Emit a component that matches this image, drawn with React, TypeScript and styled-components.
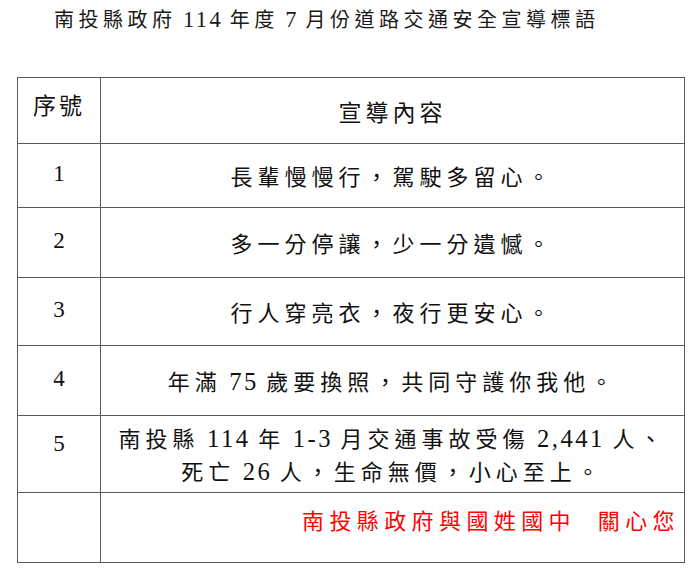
import { Fragment } from 'react';
import styled, { createGlobalStyle } from 'styled-components';

const GlobalStyle = createGlobalStyle`
	html, body {
		margin: 0;
		padding: 0;
		background: #ffffff;
	}
	body {
		font-family: "Liberation Serif", "Noto Sans CJK TC", serif;
		color: #111111;
	}
`;

interface Slogan {
	no: string;
	lines: string[];
	height: number;
	numTop?: boolean;
}

const SLOGANS: Slogan[] = [
	{ no: '1', lines: ['長輩慢慢行，駕駛多留心。'], height: 64 },
	{ no: '2', lines: ['多一分停讓，少一分遺憾。'], height: 70 },
	{ no: '3', lines: ['行人穿亮衣，夜行更安心。'], height: 68 },
	{ no: '4', lines: ['年滿 75 歲要換照，共同守護你我他。'], height: 70 },
	{
		no: '5',
		lines: ['南投縣 114 年 1-3 月交通事故受傷 2,441 人、', '死亡 26 人，生命無價，小心至上。'],
		height: 77,
		numTop: true,
	},
];

// digits are set a little larger than the CJK glyphs, as in the printed sheet
const withNumbers = (text: string) =>
	text.split(/([0-9][0-9,\-]*)/).map((part, i) =>
		/^[0-9]/.test(part) ? <Num key={i}>{part}</Num> : <Fragment key={i}>{part}</Fragment>,
	);

export default function App() {
	return (
		<Page>
			<GlobalStyle />
			<Title>{withNumbers('南投縣政府 114 年度 7 月份道路交通安全宣導標語')}</Title>
			<Table>
				<colgroup>
					<col style={{ width: 83 }} />
					<col />
				</colgroup>
				<tbody>
					<Row $height={66}>
						<HeadNo>序號</HeadNo>
						<HeadContent>宣導內容</HeadContent>
					</Row>
					{SLOGANS.map((s) => (
						<Row key={s.no} $height={s.height}>
							<NoCell $top={!!s.numTop}>{s.no}</NoCell>
							<ContentCell>
								{s.lines.map((line, i) => (
									<Line key={i}>{withNumbers(line)}</Line>
								))}
							</ContentCell>
						</Row>
					))}
					<Row $height={70}>
						<NoCell $top={false} />
						<SignCell>南投縣政府與國姓國中&nbsp;&nbsp;關心您</SignCell>
					</Row>
				</tbody>
			</Table>
		</Page>
	);
}

const Page = styled.div`
	width: 700px;
	height: 575px;
	overflow: hidden;
	padding-top: 8px;
	box-sizing: border-box;
`;

const Title = styled.h1`
	margin: 0 0 0 54px;
	height: 69px;
	font-size: 20px;
	font-weight: normal;
	line-height: 24px;
	letter-spacing: 4.5px;
	word-spacing: -3px;
	color: #1a1a1a;
`;

const Num = styled.span`
	font-size: 1.12em;
	letter-spacing: 2.5px;
	line-height: 0;
`;

const Table = styled.table`
	margin-left: 17px;
	width: 668px;
	border-collapse: collapse;
	table-layout: fixed;

	td {
		border: 1.5px solid #5a5a5a;
		padding: 0;
	}
`;

const Row = styled.tr<{ $height: number }>`
	height: ${({ $height }) => $height}px;
`;

const HeadNo = styled.td`
	text-align: center;
	vertical-align: top;
	padding-top: 14px !important;
	font-size: 23px;
	letter-spacing: 3px;
	line-height: 30px;
`;

const HeadContent = styled.td`
	text-align: center;
	vertical-align: middle;
	padding-top: 6px !important;
	font-size: 23px;
	letter-spacing: 4px;
	line-height: 30px;
`;

const NoCell = styled.td<{ $top: boolean }>`
	text-align: center;
	vertical-align: ${({ $top }) => ($top ? 'top' : 'middle')};
	padding-top: ${({ $top }) => ($top ? '13px' : '0')} !important;
	padding-bottom: ${({ $top }) => ($top ? '0' : '4px')} !important;
	font-size: 23px;
	line-height: 30px;
`;

const ContentCell = styled.td`
	text-align: center;
	vertical-align: middle;
	padding-top: 4px !important;
	font-size: 22px;
	letter-spacing: 5px;
	word-spacing: -3px;
	line-height: 33px;
`;

const Line = styled.div`
	white-space: nowrap;
`;

const SignCell = styled.td`
	text-align: right;
	vertical-align: top;
	padding: 12px 4px 0 0 !important;
	font-size: 22px;
	letter-spacing: 5.4px;
	line-height: 33px;
	color: #ff0000;
	white-space: nowrap;
`;
